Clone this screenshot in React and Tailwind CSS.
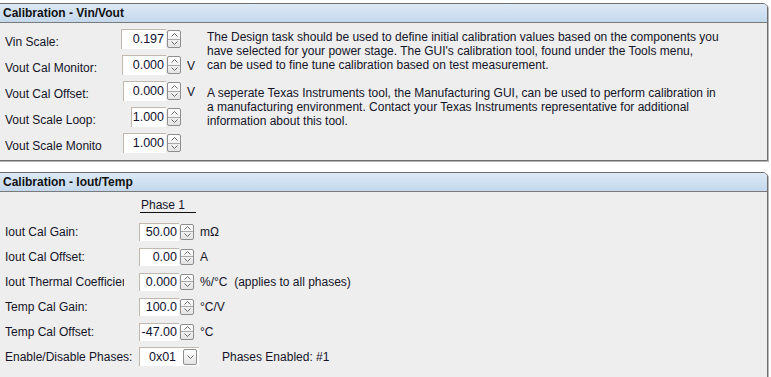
const font = { fontFamily: '"Liberation Sans", Arial, sans-serif' }

const Chevron = ({ up }) => (
  <svg width="7" height="4" viewBox="0 0 7 4" className="block">
    <path d={up ? 'M0.5 3.5 L3.5 0.5 L6.5 3.5' : 'M0.5 0.5 L3.5 3.5 L6.5 0.5'} fill="none" stroke="#6b6b6b" strokeWidth="1" />
  </svg>
)

const Spinner = ({ h }) => (
  <div className={`flex flex-col w-[14px] ${h} rounded-[2px] border border-[#8e8e8e] bg-gradient-to-b from-white to-[#e4e4e4]`}>
    <div className="flex-1 flex items-center justify-center border-b border-[#a8a8a8]">
      <Chevron up />
    </div>
    <div className="flex-1 flex items-center justify-center">
      <Chevron />
    </div>
  </div>
)

const NumBox = ({ value, w, tall }) => (
  <div className={`flex items-center ${tall ? 'h-[20px]' : 'h-[18px]'}`}>
    <div
      className={`${w} h-full bg-white border-t border-l border-[#c2b8ad] flex items-center justify-end pr-[2px] text-[12.5px] text-[#101030]`}
    >
      {value}
    </div>
    <div className="ml-[1px]">
      <Spinner h={tall ? 'h-[18px]' : 'h-[16px]'} />
    </div>
  </div>
)

const Panel = ({ title, children }) => (
  <div className="-ml-px w-[769px] border border-[#6e6e6e] rounded-tr-[5px] shadow-[1px_1px_0_#b8b8b8] bg-[#eeeeee]">
    <div className="h-[19px] rounded-tr-[4px] bg-gradient-to-b from-[#dce9f6] to-[#c4d8ec] border-b border-[#7a7a7a] pl-[3px] flex items-center">
      <span className="text-[12px] font-bold text-[#111]">{title}</span>
    </div>
    {children}
  </div>
)

const vinRows = [
  { label: 'Vin Scale:', value: '0.197', w: 'w-[45px]' },
  { label: 'Vout Cal Monitor:', value: '0.000', w: 'w-[44px]', unit: 'V' },
  { label: 'Vout Cal Offset:', value: '0.000', w: 'w-[43px]', unit: 'V' },
  { label: 'Vout Scale Loop:', value: '1.000', w: 'w-[35px]' },
  { label: 'Vout Scale Monito', value: '1.000', w: 'w-[43px]' },
]

const ioutRows = [
  { label: 'Iout Cal Gain:', value: '50.00', unit: 'mΩ' },
  { label: 'Iout Cal Offset:', value: '0.00', unit: 'A' },
  { label: 'Iout Thermal Coefficient:', value: '0.000', unit: '%/°C  (applies to all phases)', clip: true },
  { label: 'Temp Cal Gain:', value: '100.0', unit: '°C/V' },
  { label: 'Temp Cal Offset:', value: '-47.00', unit: '°C' },
]

export default function App() {
  return (
    <div style={font} className="w-[771px] h-[377px] overflow-hidden bg-white pt-[3px] text-[12px] text-[#141428]">
      <Panel title="Calibration - Vin/Vout">
        <div className="flex h-[137px]">
          <div className="w-[207px] pl-[5px] pt-[5px] shrink-0">
            {vinRows.map((r) => (
              <div key={r.label} className="flex items-start h-[26px]">
                <div className="w-[115px] mt-[7px] leading-[14px] whitespace-nowrap overflow-hidden">{r.label}</div>
                <div className="w-[61px] mt-[1px] flex justify-end">
                  <NumBox value={r.value} w={r.w} tall />
                </div>
                {r.unit && <div className="ml-[6px] mt-[5px] leading-[14px]">{r.unit}</div>}
              </div>
            ))}
          </div>
          <div className="w-[555px] pt-[7px] leading-[14px] whitespace-nowrap">
            <p>
              The Design task should be used to define initial calibration values based on the components you
              <br />
              have selected for your power stage. The GUI's calibration tool, found under the Tools menu,
              <br />
              can be used to fine tune calibration based on test measurement.
            </p>
            <p className="mt-[14px]">
              A seperate Texas Instruments tool, the Manufacturing GUI, can be used to perform calibration in
              <br />
              a manufacturing environment. Contact your Texas Instruments representative for additional
              <br />
              information about this tool.
            </p>
          </div>
        </div>
      </Panel>

      <div className="h-[11px]" />

      <Panel title="Calibration - Iout/Temp">
        <div className="h-[182px] pl-[5px]">
          <div className="ml-[135px] mt-[6px] w-[56px] h-[15px] leading-[14px] border-b border-[#111] pl-px">Phase 1</div>
          <div className="mt-[6px]">
            {ioutRows.map((r) => (
              <div key={r.label} className="flex items-center h-[25px]">
                <div className="w-[134px] whitespace-nowrap overflow-hidden">
                  {r.clip ? <div className="w-[119px] overflow-hidden">{r.label}</div> : r.label}
                </div>
                <NumBox value={r.value} w="w-[40px]" />
                <div className="ml-[6px] whitespace-pre">{r.unit}</div>
              </div>
            ))}
            <div className="flex items-center h-[25px]">
              <div className="w-[134px] whitespace-nowrap">Enable/Disable Phases:</div>
              <div className="w-[60px] h-[19px] bg-white border-t border-l border-[#c2b8ad] flex items-center">
                <div className="flex-1 text-center text-[12.5px] text-[#101030] pl-[2px]">0x01</div>
                <div className="w-[14px] h-[16px] mr-[2px] rounded-[2px] border border-[#8e8e8e] bg-gradient-to-b from-white to-[#e4e4e4] flex items-center justify-center">
                  <Chevron />
                </div>
              </div>
              <div className="ml-[23px]">Phases Enabled: #1</div>
            </div>
          </div>
        </div>
      </Panel>
    </div>
  )
}
